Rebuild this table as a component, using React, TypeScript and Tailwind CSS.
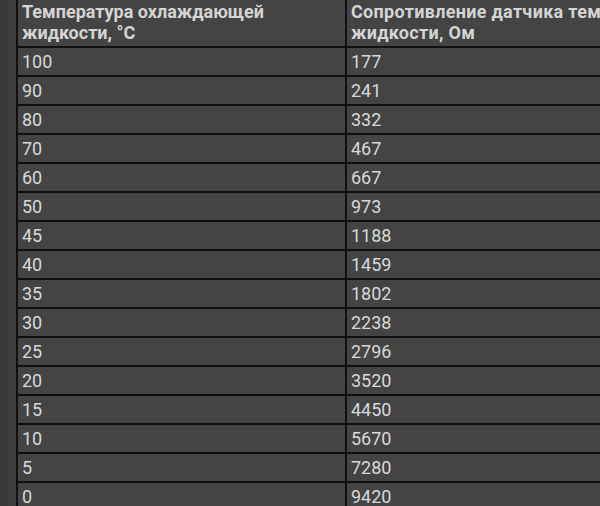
const rows: [string, string][] = [
  ["100", "177"],
  ["90", "241"],
  ["80", "332"],
  ["70", "467"],
  ["60", "667"],
  ["50", "973"],
  ["45", "1188"],
  ["40", "1459"],
  ["35", "1802"],
  ["30", "2238"],
  ["25", "2796"],
  ["20", "3520"],
  ["15", "4450"],
  ["10", "5670"],
  ["5", "7280"],
  ["0", "9420"],
];

export default function App() {
  return (
    <div className="flex h-[506px] w-[600px] overflow-hidden bg-[#3a3a3a] font-['Roboto',sans-serif] text-[#d8d8d8]">
      {/* left gutter */}
      <div className="w-[8px] shrink-0 bg-[#393939]" />
      <div className="w-[8px] shrink-0 bg-[#3d3d3d]" />

      <div className="shrink-0 border-l-2 border-[#111]">
        <div className="grid grid-cols-[329px_540px] border-b-2 border-[#111] bg-[#444]">
          <div className="h-[46px] border-r-2 border-[#111] px-[4px] pt-[1px] text-[18px] font-bold leading-[21px] text-[#d4d4d4]">
            Температура охлаждающей жидкости, °С
          </div>
          <div className="h-[46px] px-[4px] pt-[1px] text-[18px] font-bold leading-[21px] tracking-[0.3px] text-[#d4d4d4]">
            Сопротивление датчика температуры охлаждающей жидкости, Ом
          </div>
        </div>
        {rows.map(([t, r]) => (
          <div
            key={t}
            className="grid h-[29px] grid-cols-[329px_540px] border-b-2 border-[#111] bg-[#444] text-[18px] leading-[27px]"
          >
            <div className="border-r-2 border-[#111] px-[4px]">{t}</div>
            <div className="px-[4px]">{r}</div>
          </div>
        ))}
      </div>
    </div>
  );
}
